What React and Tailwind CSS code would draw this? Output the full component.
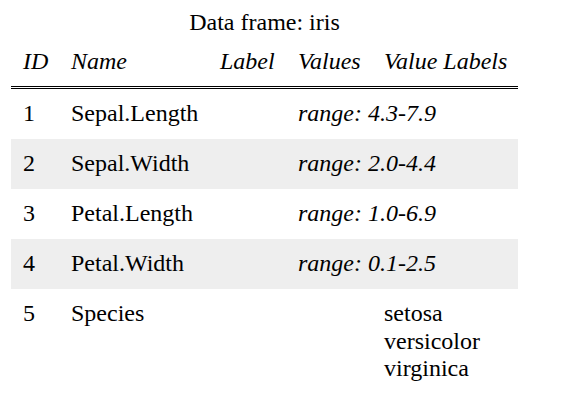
import React from 'react';

const rows = [
  { id: 1, name: 'Sepal.Length', values: 'range: 4.3-7.9' },
  { id: 2, name: 'Sepal.Width', values: 'range: 2.0-4.4' },
  { id: 3, name: 'Petal.Length', values: 'range: 1.0-6.9' },
  { id: 4, name: 'Petal.Width', values: 'range: 0.1-2.5' },
  { id: 5, name: 'Species', labels: ['setosa', 'versicolor', 'virginica'] },
];

const App = () => {
  return (
    <div className="w-[567px] h-[405px] bg-white text-black font-['Liberation_Serif','Times_New_Roman',serif] text-[24px] leading-[27.6px]">
      <div className="ml-[11px] w-[507px]">
        {/* Caption */}
        <div className="pt-[9px] text-center">Data frame: iris</div>

        {/* Header */}
        <div className="grid grid-cols-[48px_149px_78px_86px_146px] h-[52.4px] pt-[1px] items-center italic border-b-[3px] border-double border-black">
          <div className="pl-3">ID</div>
          <div className="pl-3">Name</div>
          <div className="pl-3">Label</div>
          <div className="pl-3">Values</div>
          <div className="pl-3 whitespace-nowrap">Value Labels</div>
        </div>

        {/* Body */}
        {rows.map((r) => (
          <div
            key={r.id}
            className={`grid grid-cols-[48px_149px_78px_86px_146px] py-[11.2px] ${r.id % 2 === 0 ? 'bg-[#eeeeee]' : ''}`}
          >
            <div className="pl-3">{r.id}</div>
            <div className="pl-3">{r.name}</div>
            <div className="pl-3"></div>
            {r.values ? (
              <div className="pl-3 col-span-2 italic whitespace-nowrap">{r.values}</div>
            ) : (
              <>
                <div className="pl-3"></div>
                <div className="pl-3">
                  {r.labels.map((l) => (
                    <div key={l}>{l}</div>
                  ))}
                </div>
              </>
            )}
          </div>
        ))}
      </div>
    </div>
  );
};

export default App;
